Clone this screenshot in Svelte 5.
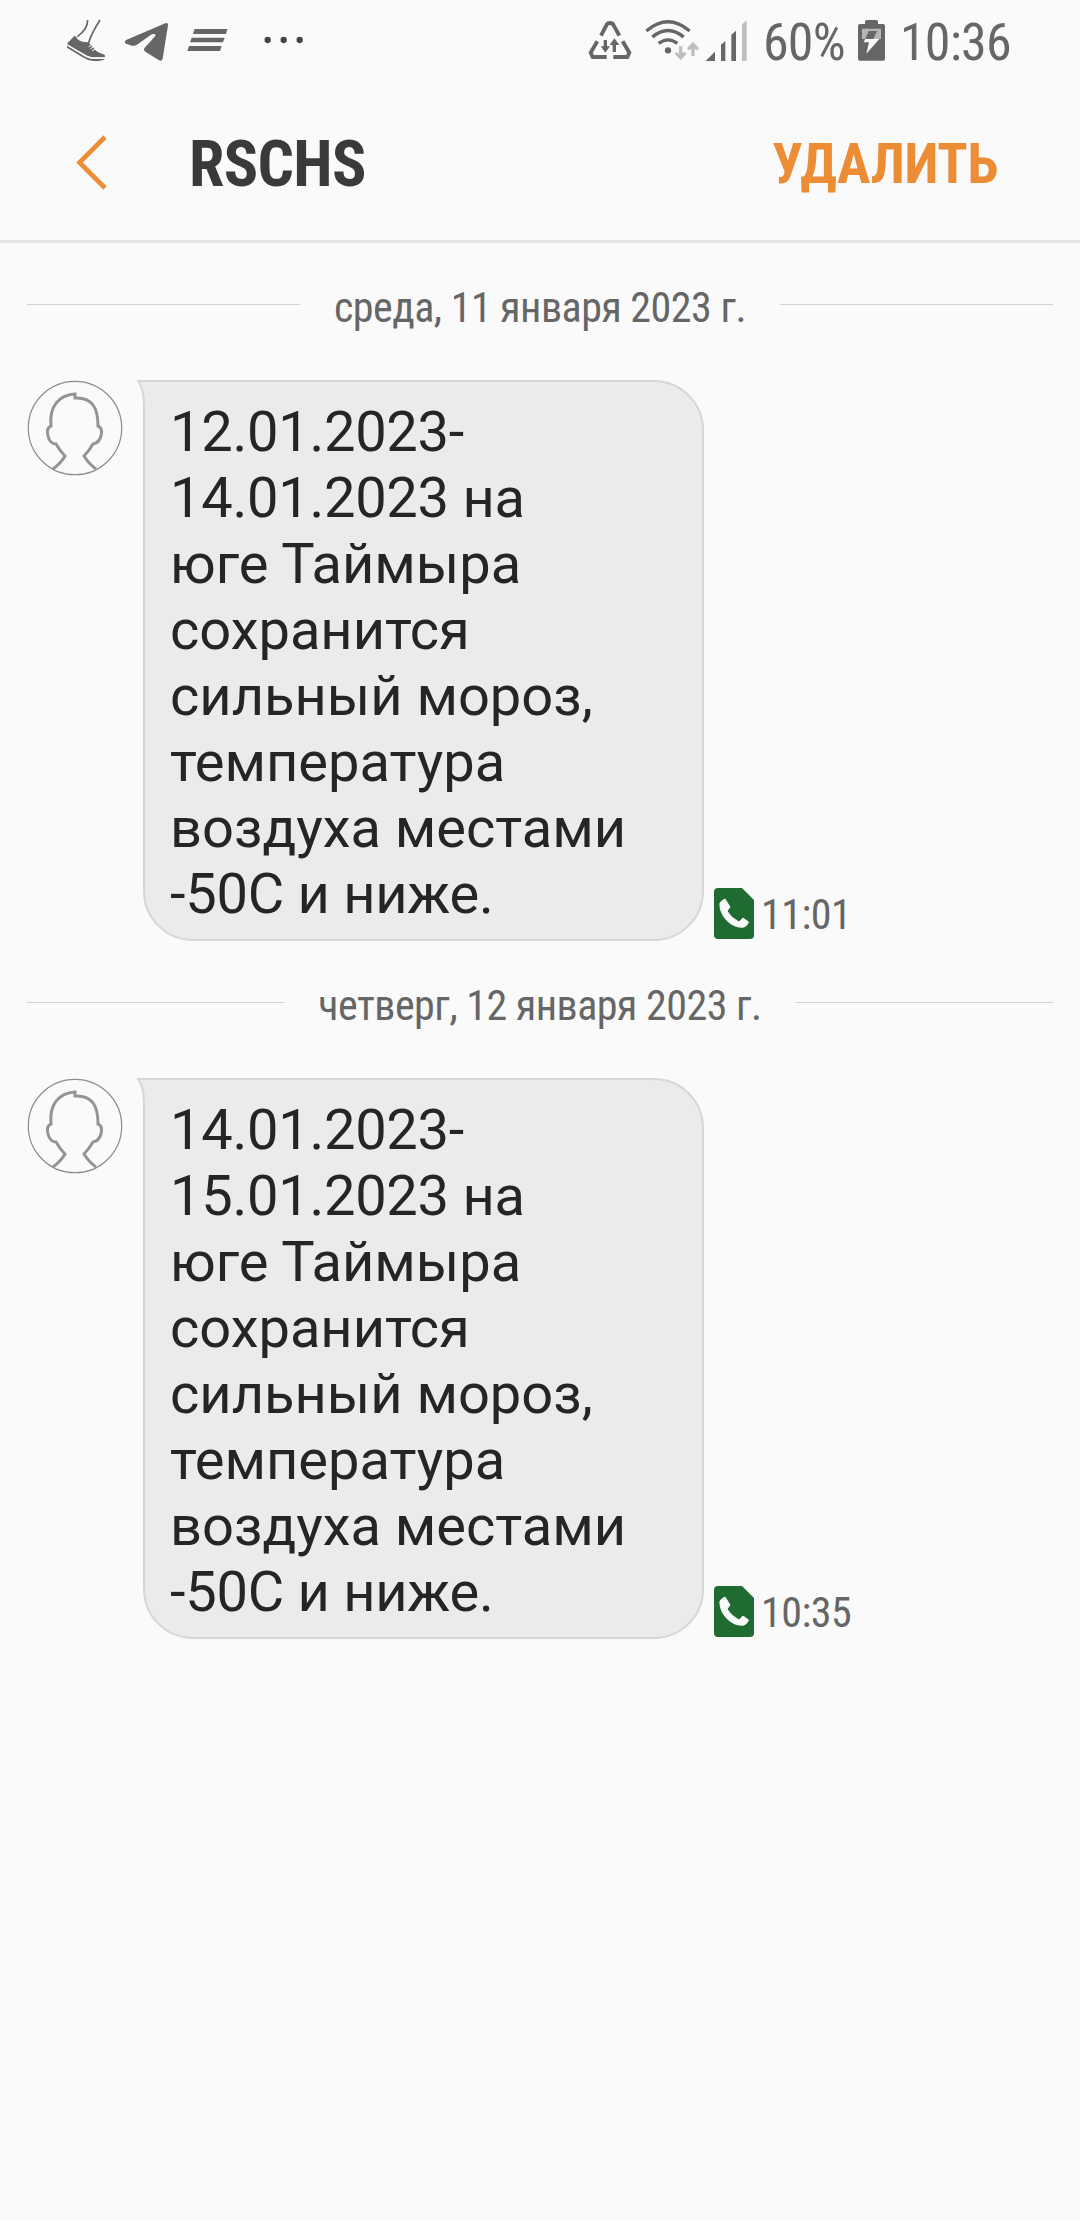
<script>
  const messages = [
    {
      id: 1,
      date: "среда, 11 января 2023 г.",
      lines: [
        "12.01.2023-",
        "14.01.2023 на",
        "юге Таймыра",
        "сохранится",
        "сильный мороз,",
        "температура",
        "воздуха местами",
        "-50С и ниже.",
      ],
      time: "11:01",
    },
    {
      id: 2,
      date: "четверг, 12 января 2023 г.",
      lines: [
        "14.01.2023-",
        "15.01.2023 на",
        "юге Таймыра",
        "сохранится",
        "сильный мороз,",
        "температура",
        "воздуха местами",
        "-50С и ниже.",
      ],
      time: "10:35",
    },
  ];

  const hasDigits = (line) => /\d/.test(line);
</script>

<div class="screen">
  <div class="status-bar">
    <div class="notifications">
      <svg width="39" height="80" viewBox="51 0 117 240">
        <path d="M113 60 Q113 88 82 110 M150 60 C136 82 122 105 116 128" fill="none" stroke="#666" stroke-width="5" />
        <path d="M52 130 L74 107 Q80 110 83 118 Q94 128 116 127 L136 150 Q143 158 164 164 L165 172 L126 172 Q112 169 98 160 L52 134Z" fill="#666" />
        <path d="M51 137 L96 164 Q112 176 130 177 L165 177 Q155 184 130 183 Q112 182 98 172 L51 143Z" fill="#666" />
        <path d="M52 134 L97 161 Q112 173 128 174 H165" fill="none" stroke="#fafafa" stroke-width="3" />
        <path d="M116 140 L126 135 M121 146 L131 141 M126 152 L136 147" stroke="#fafafa" stroke-width="3" />
      </svg>
      <svg width="45" height="80" viewBox="222 0 135 240">
        <path d="M230 119 L346 70 Q355 67 354 76 L338 176 Q335 185 327 181 L286 155 Q279 150 284 143 L314 110 Q319 103 313 102 Q308 101 302 105 L263 133 Q255 139 246 137 L228 131 Q220 124 230 119Z" fill="#666" />
      </svg>
      <svg width="41" height="80" viewBox="411 0 123 240">
        <path d="M434 87 H532 L528 102 H429Z M425 113 H524 L519 127 H420Z M417 138 H515 L510 153 H412Z" fill="#666" />
      </svg>
      <svg class="more" width="40" height="80" viewBox="642 0 120 240">
        <g fill="#444">
          <circle cx="653" cy="120" r="9.5" />
          <circle cx="701" cy="120" r="9.5" />
          <circle cx="749" cy="120" r="9.5" />
        </g>
      </svg>
    </div>
    <div class="system">
      <svg class="recycle" width="44" height="80" viewBox="54 0 132 240">
        <path d="M93 107 L109 76 Q112 69 120 69 Q128 69 131 76 L148 107 M82 124 L62 158 L68 171 H110 M158 124 L178 158 L172 171 H130" fill="none" stroke="#666" stroke-width="11.5" />
        <path d="M101 120 H111 V139 H120 L106 158 L92 139 H101Z M128 156 V135 H119 L133 115 L148 135 H138 V156Z" fill="#666" />
      </svg>
      <svg class="wifi" width="55" height="80" viewBox="225 0 165 240">
        <g fill="none" stroke="#666" stroke-width="10">
          <path d="M229 93 Q294 38 359 93" />
          <path d="M247 111 Q294 72 341 111" />
          <path d="M266 130 Q294 109 322 130" />
        </g>
        <circle cx="294" cy="151" r="9.5" fill="#666" />
        <path d="M327 139 H337 V158 L345 156 L350 161 L332 181 L314 161 L319 156 L327 161Z M364 168 V147 L356 151 L351 145 L369 125 L387 145 L382 151 L374 147 V168Z" fill="#bfbfbf" />
      </svg>
      <svg class="signal" width="42" height="80" viewBox="405 0 126 240">
        <path d="M407 183 L435 155 V183Z M453 183 V134 L466 123 V183Z M484 183 V104 L498 92 V183Z" fill="#666" />
        <path d="M516 183 V73 L530 61 V183Z" fill="#bfbfbf" />
      </svg>
      <span class="percent">60%</span>
      <svg class="battery" width="29" height="80" viewBox="351 0 87 240">
        <path d="M360 72 H375 V65 Q375 60 380 60 H409 Q414 60 414 65 V72 H429 Q435 72 435 78 V176 Q435 182 429 182 H360 Q354 182 354 176 V78 Q354 72 360 72Z" fill="#666" />
        <path d="M366 86 H423 V117 H366Z" fill="#b5b5b5" />
        <path d="M386 93 H411 L400 117 H376Z" fill="#666" />
        <path d="M376 117 H418 L379 161 L387 127 H371Z" fill="#fafafa" />
      </svg>
      <span class="clock">10:36</span>
    </div>
  </div>

  <header class="header">
    <button class="back" aria-label="Назад">
      <svg width="34" height="56" viewBox="0 0 34 56">
        <path d="M31 2 L5.5 27.5 L31 53" fill="none" stroke="#ec8c35" stroke-width="4.6" />
      </svg>
    </button>
    <h1>RSCHS</h1>
    <button class="delete">УДАЛИТЬ</button>
  </header>

  <main>
    {#each messages as message (message.id)}
      <section>
        <div class="date"><span>{message.date}</span></div>
        <div class="message">
          <svg class="avatar" width="96" height="96" viewBox="0 0 96 96" fill="none">
            <circle cx="48" cy="48" r="46.7" stroke="#8c8c8c" stroke-width="1.2" />
            <path
              d="M26 89 Q34 83 38 76 Q33 71 29 64 Q23 64 21 56 Q19 48 24 46 C22 26 32 15 48 14 V18 C66 17 71 29 71 46 Q76 48 74 56 Q72 63 66 64 Q62 71 57 76 Q62 84 69 89"
              stroke="#949494"
              stroke-width="3"
            />
          </svg>
          <div class="bubble">
            <svg class="tail" width="14" height="34" viewBox="0 0 14 34">
              <path d="M0 0 H14 V34 H6 V24 Q6 10 0 0Z" fill="#ebebeb" />
              <path d="M0 1 H14 M1 1 Q7 9 7 24 V34" fill="none" stroke="#d6d6d6" stroke-width="2" />
            </svg>
            {#each message.lines as line}
              <div class="line" class:numeric={hasDigits(line)}>{line}</div>
            {/each}
          </div>
          <div class="meta">
            <svg width="40" height="52" viewBox="0 0 40 52">
              <path d="M4 0 H28 L40 12 V47 Q40 51 36 51 H4 Q0 51 0 47 V4 Q0 0 4 0Z" fill="#1f6b31" />
              <path d="M6 15 Q7 13 11 11 L16 19 L13 23 Q17 30 25 34 L29 30 L34.5 34 Q33 38 30 39 C18 41 5 28 6 15Z" fill="#fafafa" stroke="#fafafa" stroke-linejoin="round" />
            </svg>
            <time>{message.time}</time>
          </div>
        </div>
      </section>
    {/each}
  </main>
</div>

<style>
  :global(body) {
    background: #fafafa;
  }
  .screen {
    width: 1080px;
    height: 2220px;
    overflow: hidden;
    background: #fafafa;
    font-family: "Roboto Condensed", Roboto, sans-serif;
    font-stretch: 75%;
  }
  svg {
    display: block;
    flex: none;
  }
  .status-bar {
    height: 80px;
    padding: 0 71px 0 67px;
    display: flex;
    justify-content: space-between;
    color: #666;
    font-size: 52px;
    line-height: 86px;
    letter-spacing: -0.8px;
  }
  .notifications,
  .system {
    display: flex;
    height: 80px;
  }
  .notifications {
    gap: 18px;
  }
  .more {
    margin-left: 18px;
  }
  .wifi {
    margin-left: 13px;
  }
  .signal {
    margin-left: 5px;
  }
  .percent {
    width: 79px;
    margin-left: 16px;
    white-space: nowrap;
  }
  .battery {
    margin-left: 15px;
  }
  .clock {
    width: 109px;
    margin-left: 14px;
    white-space: nowrap;
  }
  .header {
    height: 160px;
    border-bottom: 3px solid #e6e6e6;
    padding: 0 82px 0 74px;
    display: flex;
    align-items: center;
  }
  button {
    padding: 0;
    border: none;
    background: none;
    font: inherit;
    cursor: pointer;
  }
  .back {
    margin-top: 5px;
  }
  h1 {
    flex: 1;
    margin: 9px 0 0 81px;
    color: #3a3a3a;
    font-size: 64px;
    line-height: 76px;
    font-weight: 700;
    letter-spacing: -0.7px;
  }
  .delete {
    margin-top: 7px;
    color: #ec8c35;
    font-size: 56px;
    line-height: 66px;
    font-weight: 700;
    letter-spacing: -0.4px;
  }
  section {
    height: 698px;
  }
  .date {
    height: 137px;
    padding: 0 27px;
    box-sizing: border-box;
    display: flex;
    color: #666;
    font-size: 42px;
    line-height: 50px;
    letter-spacing: -0.5px;
  }
  .date span {
    padding: 40px 34px 0;
    white-space: nowrap;
  }
  .date::before,
  .date::after {
    content: "";
    flex: 1;
    height: 1px;
    margin-top: 61px;
    background: #d2d2d2;
  }
  .message {
    display: flex;
    padding-left: 27px;
  }
  .bubble {
    position: relative;
    width: 561px;
    height: 561px;
    margin-left: 20px;
    padding: 17px 24px 12px 25px;
    box-sizing: border-box;
    border: 2px solid #d6d6d6;
    border-radius: 0 50px 50px 50px;
    background: #ebebeb;
    color: #252525;
    font-family: Roboto, sans-serif;
    font-stretch: 100%;
    font-size: 56px;
    line-height: 66px;
  }
  .tail {
    position: absolute;
    left: -8px;
    top: -2px;
  }
  .line {
    white-space: nowrap;
  }
  .numeric {
    letter-spacing: -0.25px;
  }
  .meta {
    align-self: flex-end;
    display: flex;
    align-items: center;
    margin-left: 10px;
    color: #666;
    font-size: 42px;
    line-height: 52px;
    letter-spacing: -0.5px;
  }
  .meta time {
    margin: 2px 0 0 7px;
  }
</style>
